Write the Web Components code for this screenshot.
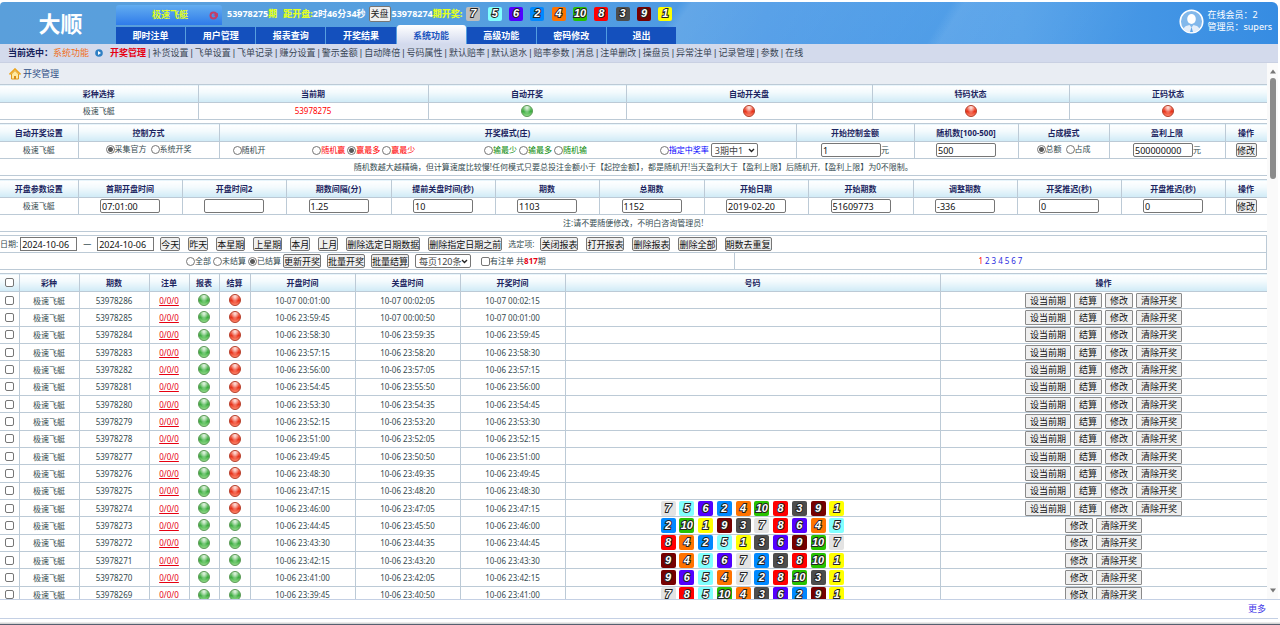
<!DOCTYPE html>
<html lang="zh-CN">
<head>
<meta charset="utf-8">
<title>开奖管理</title>
<style>
html,body{margin:0;height:100%}
body{font:8px/12px "Noto Sans","Noto Sans CJK SC",sans-serif;color:#344b50;background:#fff;overflow:hidden}
</style>
</head>
<body>
<admin-app></admin-app>
<script>
const controls = `
*{box-sizing:border-box}
button,input,select{font:9px/11px "Noto Sans","Noto Sans CJK SC",sans-serif;color:#111;margin:0;border:1px solid #767676;border-radius:2px}
button{background:#efefef;padding:0;height:14px;white-space:nowrap}
input[type=text]{width:60px;height:14px;padding:0 1px;background:#fff}
input[type=radio],input[type=checkbox]{appearance:none;width:9px;height:9px;background:#fff;flex:none;vertical-align:middle}
input[type=radio]{border-radius:50%}
input[type=radio]:checked{background:radial-gradient(circle,#5a5a5a 0 2px,#fff 3px)}
label{display:inline-flex;align-items:center;white-space:nowrap}
a{text-decoration:none;color:inherit}
.pick{position:relative;display:inline-flex}
.pick select{appearance:none;background:#fff;height:14px;padding:0 3px;color:#444}
.pick svg{position:absolute;right:3px;top:5px;pointer-events:none}
`;
const tables = controls + `
:host{display:block}
table{width:100%;table-layout:fixed;border-collapse:collapse}
th,td{border:1px solid #bccad6;padding:0;text-align:center;white-space:nowrap;line-height:12px}
tr>:first-child{border-left:0}
th{height:18px;font-weight:700;color:#1c2560;background:linear-gradient(#fff,#f3fafd 40%,#cfeaf6)}
td{height:17px;background:#fff}
`;
const chevron = `<svg width="7" height="5" viewBox="0 0 7 5" aria-hidden="true"><path d="M1 1l2.500 2.500L6 1" fill="none" stroke="#222" stroke-width="1.400"/></svg>`;
const cols = list => `<colgroup>${list.map(w => `<col style="width:${w}px">`).join('')}</colgroup>`;
const heads = list => `<tr>${list.map(t => `<th scope="col">${t}</th>`).join('')}</tr>`;
const pick = (name, label, width) => `<span class="pick"><select aria-label="${name}" style="width:${width}px"><option>${label}</option></select>${chevron}</span>`;
const radio = (group, text, on) => `<label><input type="radio" name="${group}"${on ? ' checked' : ''}>${text}</label>`;

function define(name, html) {
  customElements.define(name, class extends HTMLElement {
    connectedCallback() {
      if (this.shadowRoot) return;
      const root = this.attachShadow({mode: 'open'});
      root.innerHTML = typeof html === 'function' ? html(this) : html;
    }
  });
}

define('status-dot', el => {
  const green = el.getAttribute('state') === 'on';
  return `<style>
:host{display:inline-block;vertical-align:middle;width:12px;height:12px}
i{display:block;width:12px;height:12px;box-sizing:border-box;border-radius:50%;border:1px solid ${green ? '#5d9a58' : '#b5402c'};
background:radial-gradient(ellipse at 50% 15%,#ffffffb0 0 10%,#ffffff00 55%),linear-gradient(${green ? '#8fd08a,#3fae42 55%,#93dc8b' : '#ff8c78,#e8341c 55%,#ff8a70'})}
</style><i></i>`;
});

const ballColors = {1:'#ffff00',2:'#0089ff',3:'#4d4d4d',4:'#ff7300',5:'#81ffff',6:'#5200ff',7:'#e3e3e3',8:'#ff0000',9:'#760000',10:'#28c200'};
define('number-balls', el => `<style>
:host{display:inline-flex;justify-content:space-between;vertical-align:middle;width:184px;--size:15px}
:host([small]){width:206px;--size:14px}
span{display:flex;align-items:center;justify-content:center;width:var(--size);height:var(--size);border-radius:2px;
font:italic 700 11px/13px "Liberation Sans",sans-serif;color:#fff;-webkit-text-stroke:2px #222;paint-order:stroke fill}
</style>${el.getAttribute('values').split(' ').map(n => `<span style="background:${n === '7' && el.hasAttribute('small') ? '#bdbdbd' : ballColors[n]}">${n}</span>`).join('')}`);

define('app-header', `<style>${controls}
:host{display:flex;height:42px;margin:2px 2px 0 0;border-radius:4px 6px 0 0;color:#fff;overflow:hidden;
background:linear-gradient(122deg,#fff0 0 73%,#ffffff18 74%,#fff0 88%),linear-gradient(125deg,#fff0 0 52%,#ffffff20 53%,#fff0 75%),linear-gradient(90deg,#5a9fdb,#559fe0 40%,#4998e6 60%,#519fe8 80%,#368ce2)}
.logo{width:116px;flex:none;display:flex;align-items:center;justify-content:center;padding-left:5px;font-size:22px;line-height:28px;font-weight:700}
.center{width:561px;flex:none;display:flex;flex-direction:column;justify-content:space-between}
.info{display:flex;align-items:center;height:24px;font-size:9px;line-height:12px;font-weight:700;white-space:nowrap}
.game{display:flex;align-items:center;width:106px;height:20px;margin:3px 5px 0 0;padding:0 4px 0 36px;justify-content:space-between;border-radius:3px 3px 0 0;background:linear-gradient(#63adf0,#2f7bea);color:#e1ff24}
b{color:#e1ff24}
.gap{margin-left:6px}
.info button{margin:0 1px 0 3px;width:22px;height:16px;color:#222;font-size:9px}
number-balls{margin-left:4px}
nav{display:flex;align-items:flex-end}
nav a{flex:1;height:17px;margin-right:1px;text-align:center;font-size:9px;line-height:17px;font-weight:700;background:#1450bd}
nav a[aria-current]{height:19px;padding-top:2px;border-radius:3px 3px 0 0;background:linear-gradient(#fff,#d3daee);color:#1b55c0}
.user{margin-left:auto;display:flex;align-items:center;gap:3px;padding:0 6px 4px 0;font-size:9px;line-height:12px;white-space:nowrap}
.user p{margin:0}
</style>
<div class="logo">大顺</div>
<div class="center">
<div class="info"><span class="game">极速飞艇<svg width="9" height="9" viewBox="0 0 9 9" aria-hidden="true"><circle cx="4.500" cy="4.500" r="3" fill="none" stroke="#c33e69" stroke-width="2"/><path d="M4 4l5-2v4z" fill="#c33e69"/></svg></span>
<span>53978275</span><b>期</b><b class="gap">距开盘:</b><span>2时46分34秒</span><button>关盘</button><span>53978274</span><b>期开奖:</b><number-balls small values="7 5 6 2 4 10 8 3 9 1"></number-balls></div>
<nav aria-label="主菜单">${['即时注单','用户管理','报表查询','开奖结果','系统功能','高级功能','密码修改','退出'].map(t => `<a href="#"${t === '系统功能' ? ' aria-current="page"' : ''}>${t}</a>`).join('')}</nav>
</div>
<div class="user"><svg width="25" height="25" viewBox="0 0 25 25" aria-hidden="true"><circle cx="12.500" cy="12.500" r="11.300" fill="#82b8eb" stroke="#fff" stroke-width="1.500"/><ellipse cx="12.500" cy="10" rx="4.300" ry="5" fill="#fff"/><path d="M4.500 20c1-3 4-3.500 6-4l2 2.500 2-2.500c2 .5 5 1 6 4a11 11 0 0 1-16 0z" fill="#e4eefa"/><path d="M12.500 18l1.500 5h-3z" fill="#5fa5e8"/></svg>
<div><p>在线会员：2</p><p>管理员：supers</p></div></div>`);

define('sub-nav', `<style>${controls}
:host{display:flex;align-items:center;height:18px;margin-right:2px;padding:0 8px;background:#d3daec;border-bottom:1px solid #c9d0e2;font-size:9px;line-height:12px;color:#3a4654;white-space:nowrap}
b{color:#14205a}.area{color:#f0701c;width:42px}.icon{margin-right:7px}
nav{display:flex;gap:2px}
nav a[aria-current]{color:#e60012;font-weight:700}
nav span{font-family:"Liberation Sans",sans-serif}
</style><b>当前选中：</b><span class="area">系统功能</span>
<svg class="icon" width="8" height="8" viewBox="0 0 8 8" aria-hidden="true"><circle cx="4" cy="4" r="3.800" fill="#2f7fc4"/><path d="M3 2l3 2-3 2z" fill="#fff"/></svg>
<nav aria-label="子菜单">${['开奖管理','补货设置','飞单设置','飞单记录','赚分设置','警示金额','自动降倍','号码属性','默认赔率','默认退水','赔率参数','消息','注单删改','操盘员','异常注单','记录管理','参数','在线'].map((t, i) => `<a href="#"${i ? '' : ' aria-current="page"'}>${t}</a>`).join('<span>|</span>')}</nav>`);

define('page-title', `<style>
:host{display:flex;align-items:center;gap:2px;height:21px;flex:none;padding-left:9px;background:#e9edf3;color:#2f4f86;font-size:9px;line-height:12px}
h1{margin:0;font:inherit}
</style><svg width="12" height="12" viewBox="0 0 12 12" aria-hidden="true"><path d="M2.500 6v5h7V6L6 2.500z" fill="#ffe9a0" stroke="#e09a1c"/><path d="M.5 6.500L6 1l5.500 5.500" fill="none" stroke="#eea61e" stroke-width="1.600"/><path d="M5 8h2v3H5z" fill="#d98a1a"/></svg><h1><slot></slot></h1>`);

define('status-table', `<style>${tables}.now{color:#f00}</style>
<table>${cols([198,230,198,246,197,198])}${heads(['彩种选择','当前期','自动开奖','自动开关盘','特码状态','正码状态'])}
<tr><td>极速飞艇</td><td class="now">53978275</td><td><status-dot state="on"></status-dot></td><td><status-dot></status-dot></td><td><status-dot></status-dot></td><td><status-dot></status-dot></td></tr></table>`);

define('draw-settings', `<style>${tables}
.modes{display:grid;grid-template-columns:80fr 172fr 176fr 136fr;padding-left:13px;align-items:center}
.modes div{display:flex;gap:2px;align-items:center}
.win{color:#f00}.lose{color:#078a07}.rate{color:#00f}
.pair{display:inline-flex;gap:4px}
td button{width:21px}
</style>
<table>${cols([78,141,577,118,104,91,116,42])}${heads(['自动开奖设置','控制方式','开奖模式(庄)','开始控制金额','随机数[100-500]','占成模式','盈利上限','操作'])}
<tr><td>极速飞艇</td>
<td><span class="pair">${radio('source','采集官方',1)}${radio('source','系统开奖')}</span></td>
<td><div class="modes"><div>${radio('mode','随机开')}</div><div class="win">${radio('mode','随机赢')}${radio('mode','赢最多',1)}${radio('mode','赢最少')}</div><div class="lose">${radio('mode','输最少')}${radio('mode','输最多')}${radio('mode','随机输')}</div><div class="rate">${radio('mode','指定中奖率')}${pick('中奖率','3期中1',47)}</div></div></td>
<td><label><input type="text" aria-label="开始控制金额" value="1">元</label></td>
<td><input type="text" aria-label="随机数" value="500"></td>
<td><span class="pair">${radio('share','总额',1)}${radio('share','占成')}</span></td>
<td><label><input type="text" aria-label="盈利上限" value="500000000">元</label></td>
<td><button>修改</button></td></tr>
<tr><td colspan="8">随机数越大越精确，但计算速度比较慢!任何模式只要总投注金额小于【起控金额】，都是随机开!当天盈利大于【盈利上限】后随机开,【盈利上限】为0不限制。</td></tr></table>`);

const params = [['首期开盘时间','07:01:00'],['开盘时间2',''],['期数间隔(分)','1.25'],['提前关盘时间(秒)','10'],['期数','1103'],['总期数','1152'],['开始日期','2019-02-20'],['开始期数','51609773'],['调整期数','-336'],['开奖推迟(秒)','0'],['开盘推迟(秒)','0']];
define('period-settings', `<style>${tables}td button{width:21px}</style>
<table>${cols([78,104,104,105,104,104,105,104,105,104,104,104,42])}${heads(['开盘参数设置',...params.map(p => p[0]),'操作'])}
<tr><td>极速飞艇</td>${params.map(([n, v]) => `<td><input type="text" aria-label="${n}" value="${v}"></td>`).join('')}<td><button>修改</button></td></tr>
<tr><td colspan="13">注:请不要随便修改，不明白咨询管理员!</td></tr></table>`);

define('filter-bar', `<style>${controls}
:host{display:block;border:1px solid #bccad6;border-left:0}
.row{display:flex;align-items:center;height:16px;white-space:nowrap}
.dates{gap:6px;border-bottom:1px solid #bccad6;height:17px}
.dates label{gap:2px}
.dates input{width:57px;border-radius:0}
.group{display:flex;gap:8px}
.left{flex:735;display:flex;justify-content:center;align-items:center;align-self:stretch;border-right:1px solid #bccad6}
.right{flex:532;display:flex;justify-content:center;gap:2px;color:#2b2be0}
.right [aria-current]{color:#f00}
.left>*{margin-right:2px}
.left>button{margin-right:6px}
.left>.pick{margin-right:10px}
b{color:#e60012}
</style>
<div class="row dates"><label>日期:<input type="text" value="2024-10-06"></label><span>—</span><input type="text" aria-label="结束日期" value="2024-10-06">
<div class="group">${['今天','昨天','本星期','上星期','本月','上月','删除选定日期数据','删除指定日期之前'].map(t => `<button>${t}</button>`).join('')}</div><span>选定项:</span><div class="group">${['关闭报表','打开报表','删除报表','删除全部','期数去重复'].map(t => `<button>${t}</button>`).join('')}</div></div>
<div class="row"><div class="left">${radio('state','全部')}${radio('state','未结算')}${radio('state','已结算',1)}<button>更新开奖</button><button>批量开奖</button><button>批量结算</button>${pick('每页条数','每页120条',56)}<label><input type="checkbox">有注单</label><span>共<b>817</b>期</span></div>
<nav class="right" aria-label="分页">${[1,2,3,4,5,6,7].map(n => `<a href="#"${n === 1 ? ' aria-current="page"' : ''}>${n}</a>`).join('')}</nav></div>`);

const rows = [
['53978286','10-07 00:01:00','10-07 00:02:05','10-07 00:02:15'],
['53978285','10-06 23:59:45','10-07 00:00:50','10-07 00:01:00'],
['53978284','10-06 23:58:30','10-06 23:59:35','10-06 23:59:45'],
['53978283','10-06 23:57:15','10-06 23:58:20','10-06 23:58:30'],
['53978282','10-06 23:56:00','10-06 23:57:05','10-06 23:57:15'],
['53978281','10-06 23:54:45','10-06 23:55:50','10-06 23:56:00'],
['53978280','10-06 23:53:30','10-06 23:54:35','10-06 23:54:45'],
['53978279','10-06 23:52:15','10-06 23:53:20','10-06 23:53:30'],
['53978278','10-06 23:51:00','10-06 23:52:05','10-06 23:52:15'],
['53978277','10-06 23:49:45','10-06 23:50:50','10-06 23:51:00'],
['53978276','10-06 23:48:30','10-06 23:49:35','10-06 23:49:45'],
['53978275','10-06 23:47:15','10-06 23:48:20','10-06 23:48:30'],
['53978274','10-06 23:46:00','10-06 23:47:05','10-06 23:47:15','7 5 6 2 4 10 8 3 9 1'],
['53978273','10-06 23:44:45','10-06 23:45:50','10-06 23:46:00','2 10 1 9 3 7 8 6 4 5',1],
['53978272','10-06 23:43:30','10-06 23:44:35','10-06 23:44:45','8 4 2 5 1 3 6 9 10 7',1],
['53978271','10-06 23:42:15','10-06 23:43:20','10-06 23:43:30','9 4 5 6 7 2 3 8 10 1',1],
['53978270','10-06 23:41:00','10-06 23:42:05','10-06 23:42:15','9 6 5 4 7 2 8 10 3 1',1],
['53978269','10-06 23:39:45','10-06 23:40:50','10-06 23:41:00','7 8 5 10 4 3 6 2 9 1',1]];
define('draw-list', `<style>${tables}
table{height:331px}
th,td{line-height:9px}
th{height:18px}
td{height:auto}
td>a{color:#e60012;text-decoration:underline}
.ops{display:flex;justify-content:center;gap:3px}
.ops button{padding:0 4px;height:15px;line-height:9px;border-radius:1px;border-color:#8a8a8a}
td input,th input{display:block;margin:auto}
</style>
<table>${cols([19,60,70,40,30,31,105,105,105,375,327])}${heads(['<input type="checkbox" aria-label="全选">','彩种','期数','注单','报表','结算','开盘时间','关盘时间','开奖时间','号码','操作'])}
${rows.map(([id, open, close, draw, balls, done]) => `<tr><td><input type="checkbox" aria-label="${id}"></td><td>极速飞艇</td><td>${id}</td><td><a href="#">0/0/0</a></td><td><status-dot state="on"></status-dot></td><td><status-dot${done ? ' state="on"' : ''}></status-dot></td><td>${open}</td><td>${close}</td><td>${draw}</td><td>${balls ? `<number-balls values="${balls}"></number-balls>` : ''}</td><td><div class="ops">${(done ? ['修改','清除开奖'] : ['设当前期','结算','修改','清除开奖']).map(t => `<button>${t}</button>`).join('')}</div></td></tr>`).join('')}</table>`);

define('scroll-rail', `<style>
:host{display:flex;flex-direction:column;align-items:center;width:11px;flex:none;background:#fafafa;padding:6px 0}
svg{display:block;flex:none}
i{width:6px;height:101px;border-radius:3px;background:#8b8b8b;margin:4px 0 auto}
</style><svg width="6" height="5" viewBox="0 0 6 5"><path d="M0 4.500L3 .5l3 4z" fill="#777"/></svg><i></i><svg width="6" height="5" viewBox="0 0 6 5"><path d="M0 .5l3 4 3-4z" fill="#777"/></svg>`);

define('app-footer', `<style>
:host{display:block;flex:none;border-top:1px solid #c4d0e4}
div{height:18px;margin-right:2px;padding-right:12px;text-align:right;font-size:9px;line-height:18px;border-bottom:1px solid #c4d0e4}
a{color:#4237e8;text-decoration:none}
p{margin:0;height:5px;border-bottom:1px solid #566070;background:linear-gradient(#fff 0 3px,#d5d5d5 4px)}
</style><div><a href="#">更多</a></div><p></p>`);

define('admin-app', `<style>
:host{display:flex;flex-direction:column;height:100vh}
.body{flex:1;min-height:0;display:flex;margin-right:2px}
main{flex:1;min-width:0;overflow:hidden;display:flex;flex-direction:column}
main>*{flex:none}
.stack{display:flex;flex-direction:column;gap:3px}
</style>
<app-header></app-header><sub-nav></sub-nav>
<div class="body"><main><page-title>开奖管理</page-title><div class="stack"><status-table></status-table><draw-settings></draw-settings><period-settings></period-settings><filter-bar></filter-bar><draw-list></draw-list></div></main><scroll-rail></scroll-rail></div>
<app-footer></app-footer>`);
</script>
</body>
</html>
